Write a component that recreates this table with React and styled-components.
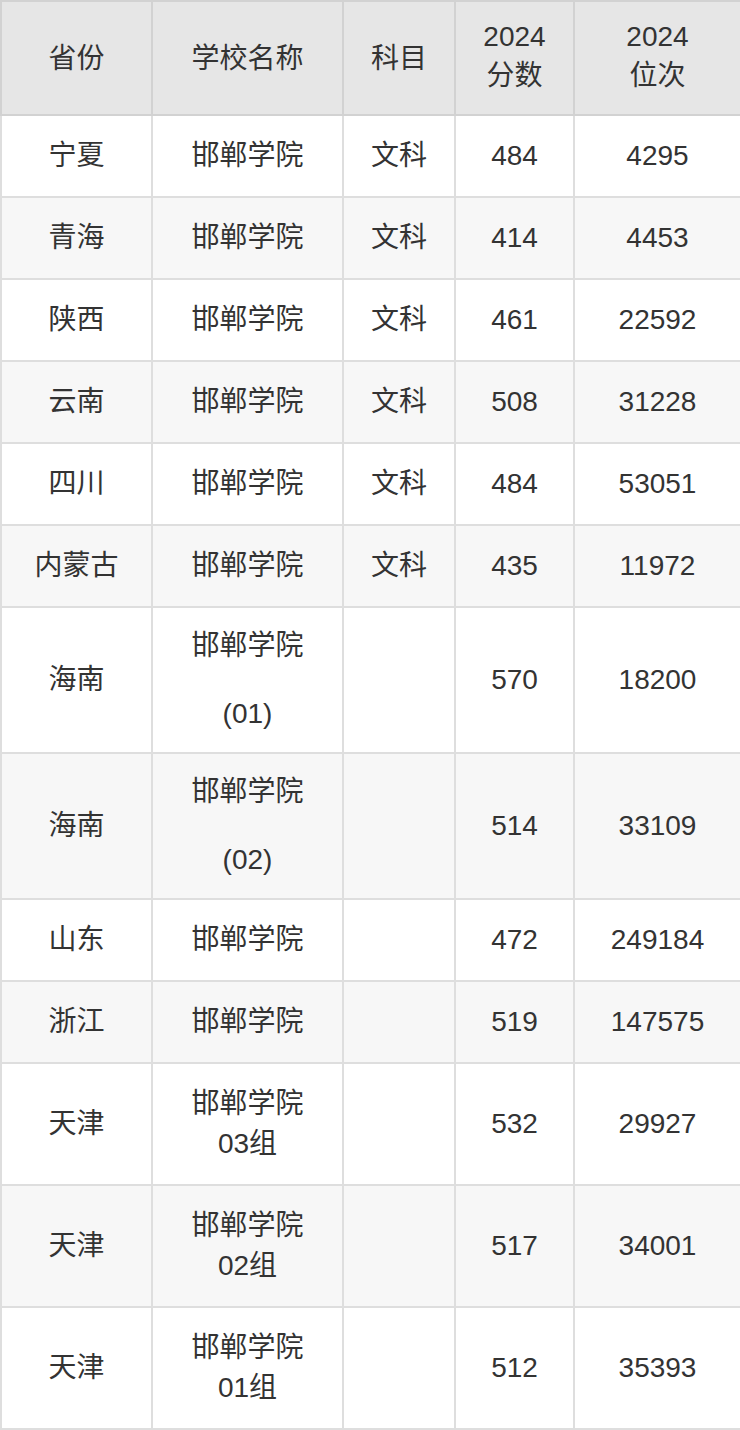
import React from "react";
import styled, { createGlobalStyle } from "styled-components";

const GlobalStyle = createGlobalStyle`
  * {
    margin: 0;
    padding: 0;
    box-sizing: border-box;
  }

  body {
    background: #fff;
    color: #333;
    font-family: "Liberation Sans", "Noto Sans CJK SC", sans-serif;
  }
`;

const Table = styled.table`
  width: 740px;
  border-collapse: collapse;
  table-layout: fixed;
  font-size: 28px;
  color: #333;
`;

const HeadCell = styled.th`
  background: #e6e6e6;
  border: 2px solid #d2d2d2;
  font-weight: 400;
  line-height: 39px;
  padding: ${(props) => (props.stacked ? "15px 0 19px" : "17px 0")};
  text-align: center;
  vertical-align: middle;
`;

const Row = styled.tr`
  background: ${(props) => (props.striped ? "#f7f7f7" : "#fff")};
`;

const Cell = styled.td`
  border: 2px solid #dedede;
  line-height: 39px;
  padding: 20px 0 21px;
  text-align: center;
  vertical-align: middle;
`;

const Lines = styled.div`
  display: flex;
  flex-direction: column;
  align-items: center;
  line-height: 39.5px;
  gap: ${(props) => (props.spaced ? "28px" : "0")};
  margin: ${(props) => (props.spaced ? "-2px 0" : "0")};
`;

const columns = [151, 191, 112, 119, 167];

const rows = [
  { province: "宁夏", school: ["邯郸学院"], subject: "文科", score: "484", rank: "4295" },
  { province: "青海", school: ["邯郸学院"], subject: "文科", score: "414", rank: "4453" },
  { province: "陕西", school: ["邯郸学院"], subject: "文科", score: "461", rank: "22592" },
  { province: "云南", school: ["邯郸学院"], subject: "文科", score: "508", rank: "31228" },
  { province: "四川", school: ["邯郸学院"], subject: "文科", score: "484", rank: "53051" },
  { province: "内蒙古", school: ["邯郸学院"], subject: "文科", score: "435", rank: "11972" },
  { province: "海南", school: ["邯郸学院", "(01)"], spaced: true, subject: "", score: "570", rank: "18200" },
  { province: "海南", school: ["邯郸学院", "(02)"], spaced: true, subject: "", score: "514", rank: "33109" },
  { province: "山东", school: ["邯郸学院"], subject: "", score: "472", rank: "249184" },
  { province: "浙江", school: ["邯郸学院"], subject: "", score: "519", rank: "147575" },
  { province: "天津", school: ["邯郸学院", "03组"], subject: "", score: "532", rank: "29927" },
  { province: "天津", school: ["邯郸学院", "02组"], subject: "", score: "517", rank: "34001" },
  { province: "天津", school: ["邯郸学院", "01组"], subject: "", score: "512", rank: "35393" },
];

const SchoolName = ({ lines, spaced }) => {
  if (lines.length === 1) return lines[0];
  return (
    <Lines spaced={spaced}>
      {lines.map((line) => (
        <div key={line}>{line}</div>
      ))}
    </Lines>
  );
};

const App = () => {
  return (
    <>
      <GlobalStyle />
      <Table>
        <colgroup>
          {columns.map((w, i) => (
            <col key={i} style={{ width: w }} />
          ))}
        </colgroup>
        <thead>
          <tr>
            <HeadCell>省份</HeadCell>
            <HeadCell>学校名称</HeadCell>
            <HeadCell>科目</HeadCell>
            <HeadCell stacked>
              2024
              <br />
              分数
            </HeadCell>
            <HeadCell stacked>
              2024
              <br />
              位次
            </HeadCell>
          </tr>
        </thead>
        <tbody>
          {rows.map((row, index) => (
            <Row key={index} striped={index % 2 === 1}>
              <Cell>{row.province}</Cell>
              <Cell>
                <SchoolName lines={row.school} spaced={row.spaced} />
              </Cell>
              <Cell>{row.subject}</Cell>
              <Cell>{row.score}</Cell>
              <Cell>{row.rank}</Cell>
            </Row>
          ))}
        </tbody>
      </Table>
    </>
  );
};

export default App;
